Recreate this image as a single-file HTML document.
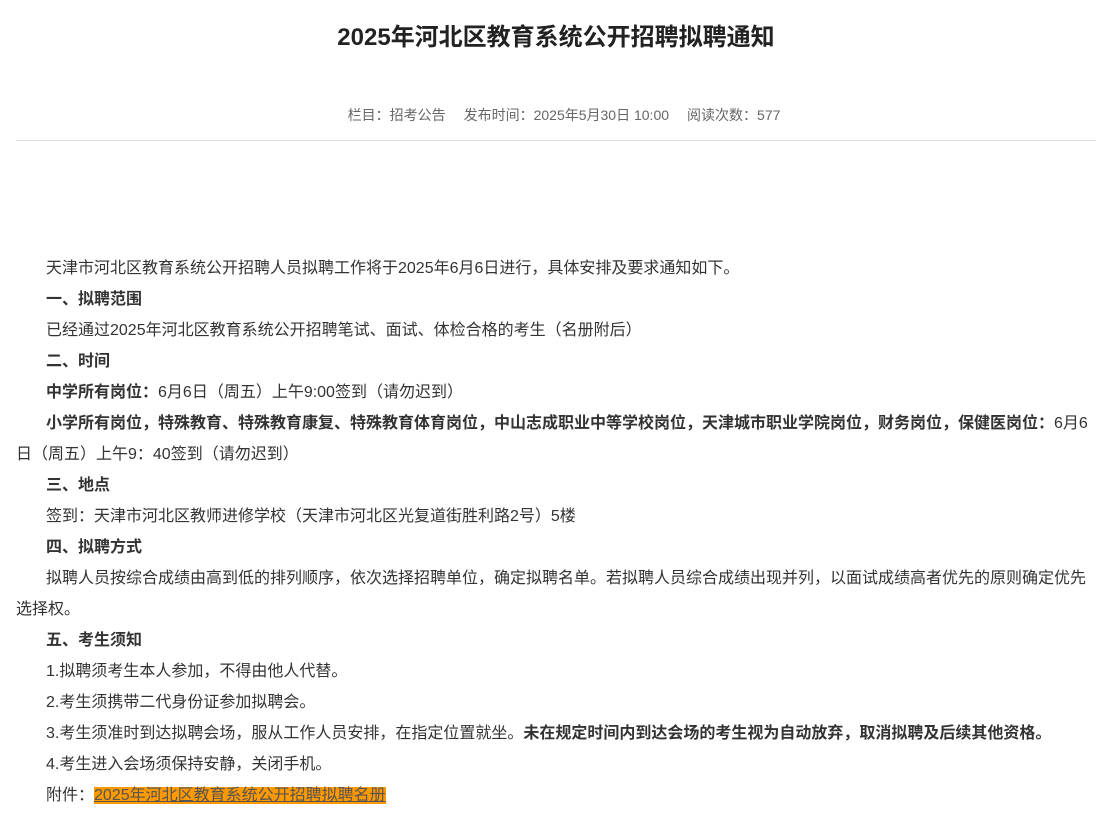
<!DOCTYPE html>
<html><head><meta charset="utf-8"><style>
body{margin:0;background:#fff;font-family:"Liberation Sans","Noto Sans CJK SC",sans-serif;color:#333;}
.wrap{position:relative;width:1104px;height:837px;overflow:hidden}
h1{position:absolute;top:18px;left:0;width:1112px;text-align:center;font-size:24px;font-weight:bold;margin:0;line-height:40px;color:#222}
.meta{position:absolute;top:104px;left:0;width:1128px;text-align:center;font-size:14px;color:#666;line-height:22px}
.meta span{margin:0 9px}
.hr{position:absolute;top:140px;left:16px;width:1080px;height:1px;background:#ddd}
.c{position:absolute;top:253px;left:16px;width:1076px;font-size:16px;line-height:31px}
.c p{margin:0;text-indent:30px}
b{font-weight:bold}
a{background:#f90;color:#555;text-decoration:underline}
</style></head><body><div class="wrap">
<h1>2025年河北区教育系统公开招聘拟聘通知</h1>
<div class="meta"><span>栏目：招考公告</span><span>发布时间：2025年5月30日 10:00</span><span>阅读次数：577</span></div>
<div class="hr"></div>
<div class="c">
<p>天津市河北区教育系统公开招聘人员拟聘工作将于2025年6月6日进行，具体安排及要求通知如下。</p>
<p><b>一、拟聘范围</b></p>
<p>已经通过2025年河北区教育系统公开招聘笔试、面试、体检合格的考生（名册附后）</p>
<p><b>二、时间</b></p>
<p><b>中学所有岗位：</b>6月6日（周五）上午9:00签到（请勿迟到）</p>
<p><b>小学所有岗位，特殊教育、特殊教育康复、特殊教育体育岗位，中山志成职业中等学校岗位，天津城市职业学院岗位，财务岗位，保健医岗位：</b>6月6日（周五）上午9：40签到（请勿迟到）</p>
<p><b>三、地点</b></p>
<p>签到：天津市河北区教师进修学校（天津市河北区光复道街胜利路2号）5楼</p>
<p><b>四、拟聘方式</b></p>
<p>拟聘人员按综合成绩由高到低的排列顺序，依次选择招聘单位，确定拟聘名单。若拟聘人员综合成绩出现并列，以面试成绩高者优先的原则确定优先选择权。</p>
<p><b>五、考生须知</b></p>
<p>1.拟聘须考生本人参加，不得由他人代替。</p>
<p>2.考生须携带二代身份证参加拟聘会。</p>
<p>3.考生须准时到达拟聘会场，服从工作人员安排，在指定位置就坐。<b>未在规定时间内到达会场的考生视为自动放弃，取消拟聘及后续其他资格。</b></p>
<p>4.考生进入会场须保持安静，关闭手机。</p>
<p>附件：<a>2025年河北区教育系统公开招聘拟聘名册</a></p>
</div>
</div></body></html>
